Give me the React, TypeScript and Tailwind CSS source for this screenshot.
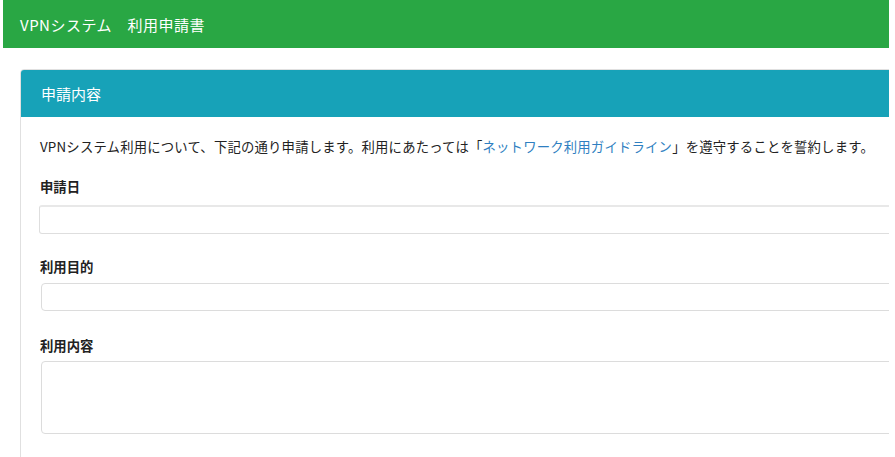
import React from "react";

export default function App() {
  const font = { fontFamily: '"Noto Sans CJK JP", "Noto Sans", sans-serif' };
  return (
    <div className="w-[889px] h-[457px] overflow-hidden bg-white" style={font}>
      <div className="ml-[3px] h-[48px] bg-[#29a744] flex items-center pl-[17px]">
        <span className="text-white text-[15px] leading-none tracking-[0.5px]">VPNシステム　利用申請書</span>
      </div>
      <div className="pt-[21px] pl-[20px]">
        <div className="w-[900px] border border-[#e0e0e0] rounded-[4px] overflow-hidden">
          <div className="h-[47px] bg-[#17a2b8] flex items-center pl-[20px]">
            <span className="text-white text-[15px] leading-none">申請内容</span>
          </div>
          <div className="px-[19px] pt-[20px] pb-[40px] text-[#222] text-[13.35px]">
            <p className="leading-[20px] tracking-[0.2px]">
              VPNシステム利用について、下記の通り申請します。利用にあたっては「
              <a className="text-[#2f7fc1]">ネットワーク利用ガイドライン</a>
              」を遵守することを誓約します。
            </p>
            <div className="mt-[20px] font-bold leading-[20px]">申請日</div>
            <div className="mt-[8px] h-[29px] border border-[#dedede] border-t-[#e8e8e8] border-t-2 rounded-[3px] -ml-[1px]"></div>
            <div className="mt-[23px] font-bold leading-[20px]">利用目的</div>
            <div className="mt-[6px] h-[28px] border border-[#dcdcdc] rounded-[4px] ml-[1px]"></div>
            <div className="mt-[25px] font-bold leading-[20px]">利用内容</div>
            <div className="mt-[5px] h-[73px] border border-[#dcdcdc] rounded-[4px] ml-[1px]"></div>
          </div>
        </div>
      </div>
    </div>
  );
}
